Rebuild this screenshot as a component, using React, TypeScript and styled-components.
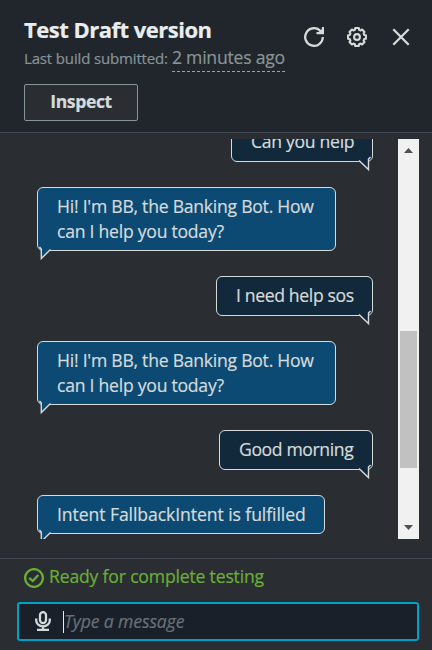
import React from "react";
import styled, { createGlobalStyle } from "styled-components";

const GlobalStyle = createGlobalStyle`
  * { box-sizing: border-box; }
  body { margin: 0; background: #2a2e33; }
`;

const Panel = styled.div`
  display: flex;
  flex-direction: column;
  width: 432px;
  height: 650px;
  overflow: hidden;
  background: #2a2e33;
  color: #d5dbdb;
  font-family: "Open Sans", "Noto Sans", sans-serif;
  font-size: 17.6px;
  -webkit-text-stroke: 0.2px currentColor;
`;

const Header = styled.header`
  display: flex;
  justify-content: space-between;
  height: 133px;
  padding: 13px 21px 0 24px;
  background: #21252c;
  border-bottom: 1px solid #414750;
`;

const Title = styled.h1`
  margin: 0;
  font-size: 22px;
  line-height: 32px;
  letter-spacing: -0.5px;
  color: #eaeded;
`;

const BuildInfo = styled.div`
  display: flex;
  align-items: baseline;
  gap: 4px;
  height: 39px;
  white-space: nowrap;
  color: #879596;
  font-size: 15px;
  letter-spacing: -0.15px;
  line-height: 25px;
`;

const BuildTime = styled.span`
  display: block;
  padding-bottom: 1px;
  font-size: 17.6px;
  letter-spacing: -0.22px;
  border-bottom: 1px dashed #95a5a6;
`;

const InspectButton = styled.button`
  display: block;
  width: 114px;
  height: 37px;
  padding: 0 0 3px;
  border: 1px solid #879596;
  border-radius: 2px;
  background: #2a2e33;
  color: #d5dbdb;
  font: bold 17.6px "Open Sans", sans-serif;
  letter-spacing: -0.4px;
`;

const Actions = styled.div`
  display: flex;
  gap: 23px;
  padding-top: 14px;
`;

const Icon = styled.svg<{ $weight?: number }>`
  display: block;
  flex: none;
  width: 20px;
  height: 20px;
  fill: none;
  stroke: currentColor;
  stroke-width: ${(p) => p.$weight ?? 2.3};
`;

const CloseIcon = styled(Icon)`
  margin-left: 1px;
`;

const ChatArea = styled.main`
  display: flex;
  justify-content: space-between;
  height: 400px;
  margin: 6px 13px 0 37px;
`;

const Messages = styled.div`
  display: flex;
  flex-direction: column;
  align-items: flex-start;
  gap: 25px;
  width: 336px;
  height: 400px;
  overflow: hidden;
`;

const Bubble = styled.div<{ $user?: boolean; $width: number; $spacing: number; $clipped?: boolean }>`
  position: relative;
  flex: none;
  width: ${(p) => p.$width}px;
  margin-top: ${(p) => (p.$clipped ? "-17px" : "0")};
  align-self: ${(p) => (p.$user ? "flex-end" : "flex-start")};
  padding: 6px 0 ${(p) => (p.$user ? 7 : 6)}px 19px;
  border: 1px solid #d5dbdb;
  border-radius: 6px;
  background: ${(p) => (p.$user ? "#12293b" : "#0c4a74")};
  line-height: 25px;
  letter-spacing: ${(p) => p.$spacing}px;
  white-space: pre;
`;

const Tail = styled.svg<{ $user?: boolean }>`
  position: absolute;
  top: calc(100% - 1px);
  ${(p) => (p.$user ? "right: 1px;" : "left: 1px;")}
  width: 12px;
  height: 12px;
  overflow: visible;
`;

const Scrollbar = styled.div`
  display: flex;
  flex-direction: column;
  align-items: center;
  width: 21px;
  height: 400px;
  background: #f1f1f1;
`;

const Arrow = styled.svg`
  display: block;
  width: 9px;
  height: 5px;
  margin: 9px 0;
  fill: #505050;
`;

const Thumb = styled.div`
  width: 17px;
  height: 137px;
  margin-top: 169px;
  margin-bottom: 48px;
  background: #c1c1c1;
`;

const Footer = styled.footer`
  height: 92px;
  margin-top: 19px;
  padding: 6px 13px 0 17px;
  border-top: 1px solid #414750;
`;

const Status = styled.div`
  display: flex;
  align-items: center;
  gap: 5px;
  height: 25px;
  margin: 0 0 12px 7px;
  color: #6aaf35;
  letter-spacing: -0.18px;
`;

const StatusText = styled.span`
  margin-top: -4px;
`;

const MessageBox = styled.div`
  display: flex;
  align-items: center;
  height: 39px;
  padding-left: 16px;
  border: 2px solid #00a1c9;
  border-radius: 3px;
  background: #1a2029;
`;

const MicIcon = styled.svg`
  display: block;
  width: 17px;
  height: 20px;
  margin-top: -1px;
  fill: none;
  stroke: #d5dbdb;
  stroke-width: 2.3;
`;

const Caret = styled.span`
  width: 1px;
  height: 22px;
  margin-left: 11px;
  background: #eaeded;
`;

const Placeholder = styled.span`
  margin-top: -2px;
  color: #687078;
  font-style: italic;
  letter-spacing: -0.12px;
`;

type Message = { text: string; width: number; spacing: number; user?: boolean; clipped?: boolean };

const greeting = "Hi! I'm BB, the Banking Bot. How\ncan I help you today?";

const messages: Message[] = [
  { text: "Can you help", width: 142, spacing: -0.3, user: true, clipped: true },
  { text: greeting, width: 299, spacing: -0.25 },
  { text: "I need help sos", width: 157, spacing: -0.36, user: true },
  { text: greeting, width: 299, spacing: -0.25 },
  { text: "Good morning", width: 154, spacing: -0.38, user: true },
  { text: "Intent FallbackIntent is fulfilled", width: 288, spacing: -0.08 },
];

function ChatBubble({ text, width, spacing, user, clipped }: Message) {
  return (
    <Bubble $user={user} $width={width} $spacing={spacing} $clipped={clipped}>
      {text}
      {user ? (
        <Tail $user viewBox="0 0 12 12">
          <path d="M0 0V1L10 10V-1H1Z" fill="#12293b" />
          <path d="M0 0.5L9.5 9.5V-1L11.5 -3" fill="none" stroke="#d5dbdb" strokeWidth="1.4" />
        </Tail>
      ) : (
        <Tail viewBox="0 0 12 12">
          <path d="M2 -1H11V1L2 10Z" fill="#0c4a74" />
          <path d="M0.5 -2L2.3 0V9.5L11.5 0.5" fill="none" stroke="#d5dbdb" strokeWidth="1.4" />
        </Tail>
      )}
    </Bubble>
  );
}

const gearPath = (() => {
  const points: string[] = [];
  for (let i = 0; i < 8; i++) {
    const offsets: [number, number][] = [[-16, 7.5], [-11, 9.1], [11, 9.1], [16, 7.5]];
    for (const [deg, r] of offsets) {
      const a = ((i * 45 + deg) * Math.PI) / 180;
      points.push(`${(10 + r * Math.sin(a)).toFixed(2)} ${(10 - r * Math.cos(a)).toFixed(2)}`);
    }
  }
  return `M${points.join("L")}Z`;
})();

export default function App() {
  return (
    <>
      <GlobalStyle />
      <Panel>
        <Header>
          <div>
            <Title>Test Draft version</Title>
            <BuildInfo>
              Last build submitted: <BuildTime>2 minutes ago</BuildTime>
            </BuildInfo>
            <InspectButton>Inspect</InspectButton>
          </div>
          <Actions>
            <Icon viewBox="0 0 20 20">
              <path d="M18.8 10A8.8 8.8 0 1 1 16.6 4.2" />
              <path d="M12.5 6.2H19V0" />
              <path d="M14 6L19 1V7Z" fill="currentColor" stroke="none" />
            </Icon>
            <Icon viewBox="0 0 20 20" $weight={2.1}>
              <path d={gearPath} strokeLinejoin="round" />
              <circle cx="10" cy="10" r="2.9" />
            </Icon>
            <CloseIcon viewBox="0 0 20 20">
              <path d="M2.3 2.3L17.7 17.7M17.7 2.3L2.3 17.7" />
            </CloseIcon>
          </Actions>
        </Header>
        <ChatArea>
          <Messages>
            {messages.map((m, i) => (
              <ChatBubble key={i} {...m} />
            ))}
          </Messages>
          <Scrollbar>
            <Arrow viewBox="0 0 9 5"><path d="M4.5 0L9 5H0Z" /></Arrow>
            <Thumb />
            <Arrow viewBox="0 0 9 5"><path d="M4.5 5L9 0H0Z" /></Arrow>
          </Scrollbar>
        </ChatArea>
        <Footer>
          <Status>
            <Icon viewBox="0 0 20 20">
              <circle cx="10" cy="10" r="8.9" />
              <path d="M5.2 9.8L8.8 13L14.3 7" />
            </Icon>
            <StatusText>Ready for complete testing</StatusText>
          </Status>
          <MessageBox>
            <MicIcon viewBox="0 0 17 20">
              <rect x="5" y="1.1" width="6" height="11" rx="3" />
              <path d="M1.2 7.5V9.5A6.8 5.8 0 0 0 14.8 9.5V7.5M8 15V19M2 18.8H14" />
            </MicIcon>
            <Caret />
            <Placeholder>Type a message</Placeholder>
          </MessageBox>
        </Footer>
      </Panel>
    </>
  );
}
